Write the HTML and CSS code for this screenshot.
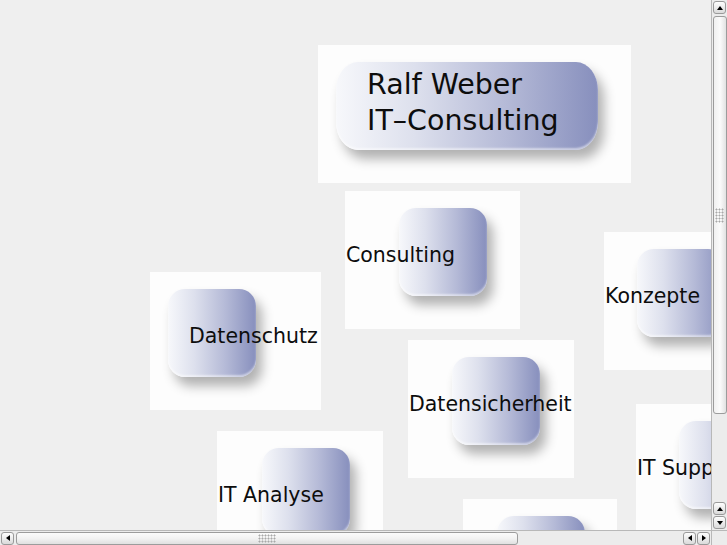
FILE: index.html
```html
<!DOCTYPE html>
<html lang="de">

<head>
    <meta charset="UTF-8" />
    <meta name="viewport" content="width=device-width, initial-scale=1.0" />
    <title>Ralf Weber IT-Consulting</title>
    <link rel="stylesheet" href="styles.css">
</head>

<body>
    <div class="window">
        <div class="canvas">
            <a class="tile t-logo" href="#">
                <span class="btn btn-wide"></span>
                <span class="logo-text">Ralf Weber<br>IT–Consulting</span>
            </a>
            <a class="tile t-consulting" href="#">
                <span class="btn"></span>
                <span class="label">Consulting</span>
            </a>
            <a class="tile t-datenschutz" href="#">
                <span class="btn"></span>
                <span class="label">Datenschutz</span>
            </a>
            <a class="tile t-konzepte" href="#">
                <span class="btn"></span>
                <span class="label">Konzepte</span>
            </a>
            <a class="tile t-sicherheit" href="#">
                <span class="btn"></span>
                <span class="label">Datensicherheit</span>
            </a>
            <a class="tile t-support" href="#">
                <span class="btn"></span>
                <span class="label">IT Support</span>
            </a>
            <a class="tile t-analyse" href="#">
                <span class="btn"></span>
                <span class="label">IT Analyse</span>
            </a>
            <a class="tile t-netz" href="#">
                <span class="btn"></span>
            </a>
        </div>

        <!-- scrollbars -->
        <div class="vbar">
            <span class="arrow up"></span>
            <span class="thumb thumb-v"><span class="grip grip-v"></span></span>
            <span class="spacer"></span>
            <span class="arrow up"></span>
            <span class="arrow down"></span>
        </div>
        <div class="hbar">
            <span class="arrow left"></span>
            <span class="thumb thumb-h"><span class="grip grip-h"></span></span>
            <span class="spacer"></span>
            <span class="arrow left"></span>
            <span class="arrow right"></span>
        </div>
        <div class="corner"></div>
    </div>
</body>

</html>
```

FILE: styles.css
```css
body {
    margin: 0;
    overflow: hidden;
    background-color: #efefef;
    font-family: "DejaVu Sans", "Liberation Sans", sans-serif;
}

.window {
    display: grid;
    grid-template-columns: 711px 16px;
    grid-template-rows: 530px 15px;
    width: 727px;
    height: 545px;
}

/* Freie Fläche, die Kacheln liegen an festen Koordinaten */
.canvas {
    position: relative;
    overflow: hidden;
    background-color: #efefef;
}

.tile {
    position: absolute;
    height: 138px;
    background-color: #fdfdfd;
    display: grid;
    text-decoration: none;
    color: #0d0d0d;
}

.tile > * {
    grid-area: 1 / 1;
    align-self: start;
    justify-self: start;
}

.btn {
    width: 88px;
    height: 88px;
    margin-top: 17px;
    border-radius: 17px;
    background: linear-gradient(90deg, #f7f8fb 0%, #dde0ed 30%, #b5bad7 65%, #878fbd 100%);
    box-shadow: 6px 9px 12px rgba(0, 0, 0, 0.3), inset 0 -2px 2px rgba(255, 255, 255, 0.5);
}

.btn-wide {
    width: 262px;
    margin-left: 18px;
    border-radius: 22px / 28px;
}

.label {
    font-size: 20.5px;
    line-height: 24px;
    margin-top: 52px;
    margin-left: 1px;
    white-space: nowrap;
}

.logo-text {
    font-size: 28.5px;
    line-height: 36px;
    margin-top: 22px;
    margin-left: 49px;
    white-space: nowrap;
}

.t-logo { left: 318px; top: 45px; width: 313px; }
.t-consulting { left: 345px; top: 191px; width: 175px; }
.t-consulting .btn { margin-left: 54px; }
.t-datenschutz { left: 150px; top: 272px; width: 171px; }
.t-datenschutz .btn { margin-left: 18px; }
.t-datenschutz .label { margin-left: 39px; }
.t-konzepte { left: 604px; top: 232px; width: 150px; }
.t-konzepte .btn { margin-left: 33px; }
.t-sicherheit { left: 408px; top: 340px; width: 166px; }
.t-sicherheit .btn { margin-left: 44px; }
.t-support { left: 636px; top: 404px; width: 150px; }
.t-support .btn { margin-left: 43px; }
.t-analyse { left: 217px; top: 431px; width: 166px; }
.t-analyse .btn { margin-left: 45px; }
.t-netz { left: 463px; top: 499px; width: 154px; }
.t-netz .btn { margin-left: 34px; }

/* Scrollbalken */
.vbar,
.hbar,
.corner {
    background-color: #ececec;
    box-sizing: border-box;
}

.vbar {
    display: flex;
    flex-direction: column;
    align-items: center;
    border-left: 1px solid #b8b8b8;
    padding: 1px 0;
}

.hbar {
    display: flex;
    align-items: center;
    border-top: 1px solid #b8b8b8;
    padding: 0 1px;
}

.corner {
    border-top: 1px solid #b8b8b8;
    border-left: 1px solid #b8b8b8;
}

.spacer {
    flex: 1;
}

.arrow {
    width: 13px;
    height: 13px;
    box-sizing: border-box;
    border: 1px solid #9a9a9a;
    border-radius: 3px;
    background: linear-gradient(#fefefe, #dadada);
    display: flex;
    align-items: center;
    justify-content: center;
    flex: none;
}

.vbar .arrow + .arrow {
    margin-top: 1px;
}

.hbar .arrow + .arrow {
    margin-left: 1px;
}

.arrow::before {
    content: "";
    width: 0;
    height: 0;
}

.up::before {
    border-left: 3px solid transparent;
    border-right: 3px solid transparent;
    border-bottom: 4px solid #000;
}

.down::before {
    border-left: 3px solid transparent;
    border-right: 3px solid transparent;
    border-top: 4px solid #000;
}

.left::before {
    border-top: 3px solid transparent;
    border-bottom: 3px solid transparent;
    border-right: 4px solid #000;
}

.right::before {
    border-top: 3px solid transparent;
    border-bottom: 3px solid transparent;
    border-left: 4px solid #000;
}

.thumb {
    box-sizing: border-box;
    border: 1px solid #9c9c9c;
    border-radius: 3px;
    display: flex;
    align-items: center;
    justify-content: center;
    flex: none;
}

.thumb-v {
    width: 14px;
    height: 398px;
    margin-top: 2px;
    background: linear-gradient(90deg, #f0f0f0, #fbfbfb 50%, #e2e2e2);
}

.thumb-h {
    width: 502px;
    height: 13px;
    margin-left: 2px;
    background: linear-gradient(#fbfbfb, #f2f2f2 50%, #e0e0e0);
}

.grip {
    background-image: radial-gradient(circle, #a8a8a8 0.8px, transparent 1.2px);
    background-size: 3px 3px;
}

.grip-v {
    width: 9px;
    height: 15px;
}

.grip-h {
    width: 18px;
    height: 9px;
}
```
